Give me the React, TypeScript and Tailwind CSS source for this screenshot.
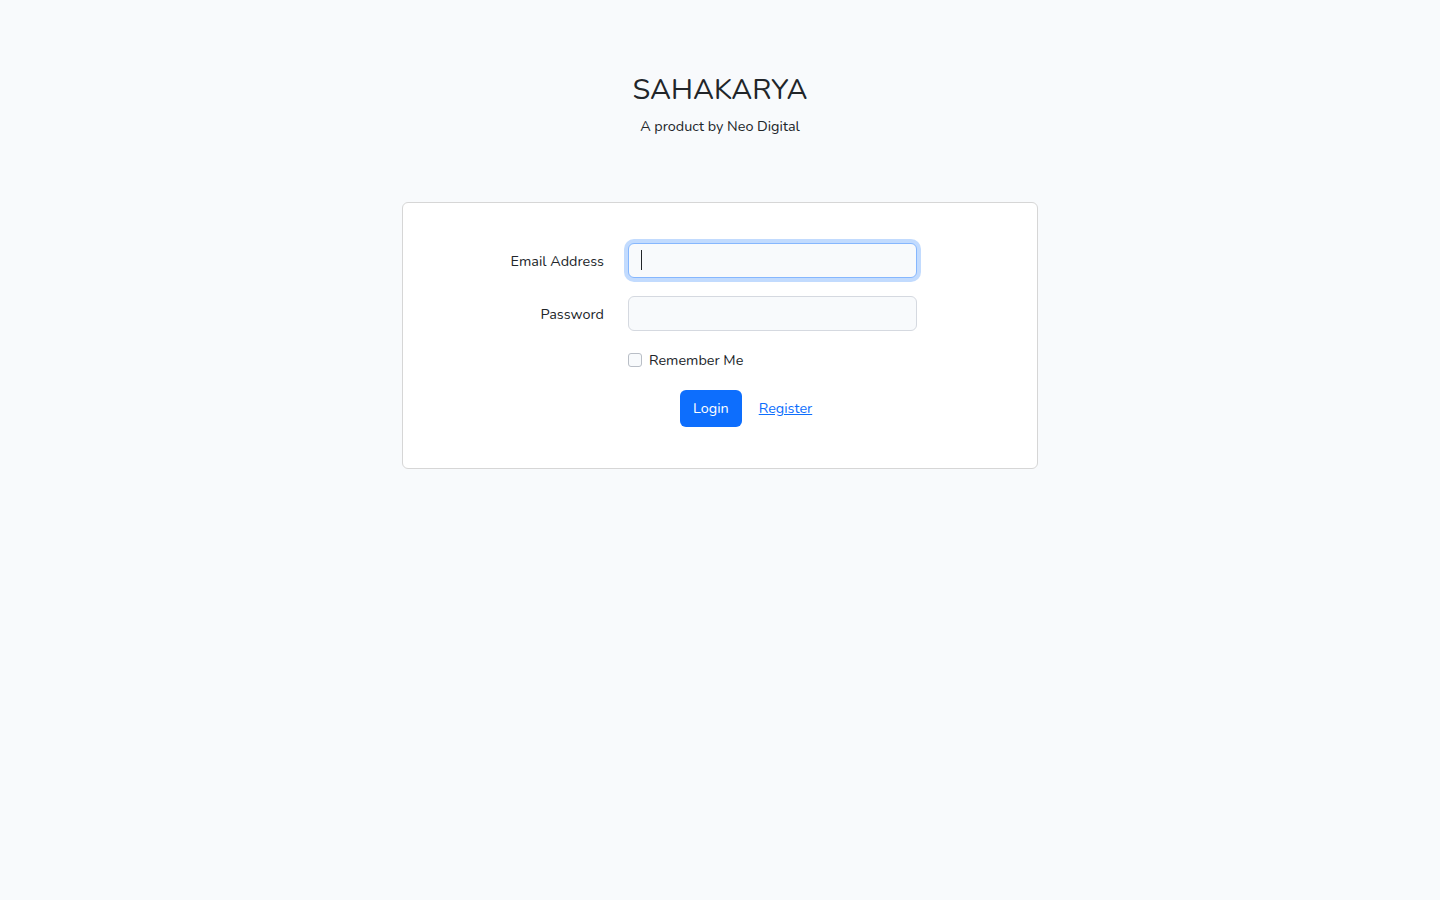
import React from "react";

const font = { fontFamily: "Nunito, Lato, 'Noto Sans', sans-serif" };

function Field({ label, type, focused }: { label: string; type: string; focused?: boolean }) {
  return (
    <div className="flex items-center gap-6">
      <label className="w-[201px] pt-1 text-right text-[14.4px] text-[#212529]">{label}</label>
      <div className="relative w-[289px]">
        <input
          type={type}
          className={
            "block h-[35px] w-full rounded-md border bg-[#f8fafc] px-3 text-[14.4px] outline-none caret-transparent " +
            (focused
              ? "border-[#86b7fe] shadow-[0_0_0_4px_rgba(13,110,253,0.25)]"
              : "border-[#d5d9e0]")
          }
        />
        {focused && <span className="pointer-events-none absolute left-[13px] top-[7px] h-[20px] w-px bg-[#212529]" />}
      </div>
    </div>
  );
}

export default function App() {
  return (
    <div className="min-h-screen bg-[#f8fafc] text-[#212529]" style={font}>
      <div className="flex flex-col items-center pt-[70px]">
        <h1 className="text-[28.8px] leading-[40px] font-normal">SAHAKARYA</h1>
        <p className="mt-[6px] text-[14.4px]">A product by Neo Digital</p>
      </div>

      <div className="mx-auto mt-[64px] w-[636px] rounded-md border border-[#d6d6d6] bg-white pt-[40px] pb-[41px]">
        <div className="flex flex-col">
          <Field label="Email Address" type="email" focused />
          <div className="h-[18px]" />
          <Field label="Password" type="password" />

          <div className="mt-[19px] flex items-center pl-[225px]">
            <span className="h-[14px] w-[14px] rounded-[3px] border border-[#b9bec6] bg-[#f8fafc]" />
            <span className="ml-[7px] text-[14.4px]">Remember Me</span>
          </div>

          <div className="mt-[19px] flex items-center pl-[277px]">
            <button className="h-[37px] rounded-md bg-[#0d6efd] px-[13px] text-[14.4px] text-white">Login</button>
            <a href="#" className="ml-[17px] text-[14.4px] text-[#0d6efd] underline">Register</a>
          </div>
        </div>
      </div>
    </div>
  );
}
